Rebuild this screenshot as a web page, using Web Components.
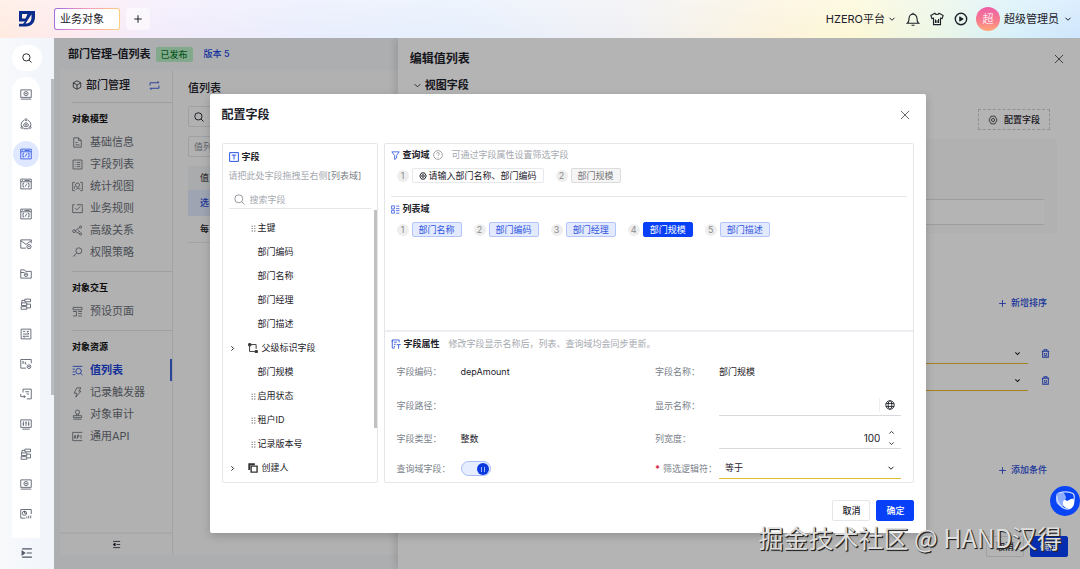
<!DOCTYPE html>
<html lang="zh-CN">
<head>
<meta charset="utf-8">
<title>业务对象</title>
<style>
  html, body { margin: 0; height: 100%; }
  body {
    font-family: Inter, "Noto Sans CJK SC", sans-serif;
    font-size: 9px; line-height: 16px; color: #1d2129; background: #f5f7fa; overflow: hidden;
    --blue: #0840f8; --line: #e4e6ea; --muted: #a6a9b0; --label: #7a7f8a;
  }
</style>
</head>
<body>
<app-shell>
  <app-header slot="header"></app-header>
  <icon-rail slot="rail"></icon-rail>
  <app-workspace slot="main"></app-workspace>
  <field-drawer slot="drawer"></field-drawer>
  <config-dialog slot="dialog"></config-dialog>
</app-shell>

<script>
const ICONS = {
  plus: '<path d="M8 2v12M2 8h12"/>',
  close: '<path d="M1.500 1.500l13 13M14.500 1.500l-13 13"/>',
  down: '<path d="M3 5.5l5 5 5-5"/>',
  up: '<path d="M3 10.5l5-5 5 5"/>',
  right: '<path d="M5.5 3l5 5-5 5"/>',
  search: '<circle cx="7" cy="7" r="5.8"/><path d="M11.300 11.300l4 4"/>',
  bell: '<path d="M8 .800v1.200M1.500 12.800h13c-1.500-1-2-2.500-2-5.600a4.500 4.800 0 0 0-9 0C3.500 10.300 3 11.800 1.500 12.800zM6.300 15.200h3.400"/>',
  shirt: '<path d="M5.500 1.500L1 4l1.200 3.500L4 7v7.500h8V7l1.800.5L15 4l-4.500-2.500C9.800 3.300 6.200 3.300 5.500 1.500zM6.200 8.500v4M8 9.500v3M9.800 8v4.500"/>',
  play: '<circle cx="8" cy="8" r="6.5"/><path d="M6.500 5.500v5L10.500 8z" fill="currentColor" stroke-width="1"/>',
  monitor: '<path d="M1 2.500h14v10H1zM1 14.800h14"/><path d="M8 4.500l2.600 1.500v3L8 10.500 5.400 9V6z"/><circle cx="8" cy="7.500" r=".7"/>',
  ring: '<path d="M5.500 3A6.600 6.600 0 0 0 2 11.500M10.500 3A6.600 6.600 0 0 1 14 11.500M4.500 14.300h7"/><circle cx="8" cy="2.300" r="1.400"/><circle cx="2.600" cy="12.600" r="1.300"/><circle cx="13.400" cy="12.600" r="1.300"/><path d="M5 10.500V8.300L8 6l3 2.300v2.200L8 11.800z"/><circle cx="8" cy="9" r=".8"/>',
  code: '<path d="M1 1.500h14v13H1zM1 5h14M3 3.300h1M6 3.300h7M5.500 7H4v5h1.500M10.500 7H12v5h-1.500M9 7.500l-2 4"/>',
  mail: '<path d="M15 7V2.500H1v11h7M1 3.500l7 5 7-5"/><circle cx="12" cy="11.500" r="2.800"/><circle cx="12" cy="11.500" r=".6"/>',
  folder: '<path d="M1 13.500v-11h5l1.500 2H15v9zM1 6h5"/><path d="M8 6.500l2.200 1.300v2.500L8 11.500l-2.200-1.200V7.800z"/><circle cx="8" cy="9" r=".5"/>',
  flow: '<path d="M6.500 1.500H14v3.500H6.500zM2 6.500h7V10H2zM1.500 11.500H9V15H1.500zM6.500 3.200H2.500v3.300M9 8.200h5v5H9"/>',
  swap: '<path d="M1.500 1.500h13v13h-13zM4 4.500h3M9 4.500h3M4 8h8l-2-2M12 11H4l2 2"/>',
  cardset: '<path d="M15 7V2H1v11.500h7M4 5v3M7 5v3h1.500M3 5h2"/><circle cx="12" cy="11.500" r="2.500"/><circle cx="12" cy="11.500" r=".6"/>',
  enter: '<path d="M4 6V1.500h11v13H9M7 5h5M9 8h3M1 8v3.500h6M5 9.500l2 2-2 2"/>',
  sliders: '<path d="M1 2.500h14v10H1zM3 14.800h10M4.500 4.500v6M8 4.500v6M11.500 4.500v6M3.500 8h2M7 6.500h2M10.500 8h2"/>',
  chart: '<path d="M15 8V2H1v11.500h6"/><circle cx="6" cy="7" r="2.800"/><path d="M6 4v3h3M9 13.800v-2.500M11.500 13.800v-3.500M14.300 13.800V10"/>',
  indent: '<path d="M1.500 2.500h13M7.500 8h7M1.500 13.500h13"/><path d="M1.500 5.500v5L5 8z" fill="currentColor"/>',
  outdent: '<path d="M2 2.500h12.500M8 8h6.500M2 13.500h12.500"/><path d="M5.500 5.500v5L2 8z" fill="currentColor"/>',
  cube: '<path d="M8 1.200l6 3.300v7L8 14.800l-6-3.300v-7zM2 4.500L8 8l6-3.500M8 8v6.800"/>',
  loop: '<path d="M1.500 8V4h13l-2-2.300M14.500 8v4h-13l2 2.300"/>',
  doc: '<path d="M2.500 1.200h7l4 4v9.600h-11zM9.500 1.200v4h4M5 8h3M5 11.500h6"/>',
  list: '<path d="M1.500 1.500h13v13h-13zM4 5h1M7 5h5M4 8h1M7 8h5M4 11h1M7 11h5"/>',
  stats: '<path d="M4 2H1v12h3M12 2h3v12h-3M3.500 11V8M5.500 13l3-3 2 2 2-2"/><circle cx="8" cy="6" r="3"/>',
  rule: '<path d="M15 6v8H1V2.500h3M7 2.500h8v3M4.500 7.500L7 10l5-5"/>',
  share: '<circle cx="3" cy="9" r="2"/><circle cx="12.500" cy="3" r="1.600"/><circle cx="12.500" cy="13" r="1.600"/><path d="M4.800 8L11 4M5 9.500l6 3M8.500 8l3.500 2"/>',
  key: '<circle cx="10" cy="5.500" r="4.300"/><path d="M7 8.500L1.500 14M3.500 12l1.500 1.500"/>',
  pages: '<path d="M1.500 2h13v3.500h-13zM1.500 8h5v6.500h-5M9 8h5.500M9 11h5.500M9 14.500h5.500"/>',
  lookup: '<path d="M1 2h14M1 6h3M1 10h3M1 14h4"/><circle cx="9.500" cy="9" r="4"/><path d="M12.300 12l3 3"/>',
  bolt: '<path d="M7 1.200h6L9.800 6H13L5.500 14.800 7 9H3z"/>',
  stamp: '<circle cx="8" cy="4.500" r="3"/><path d="M6.500 7.300v2.200M9.500 7.300v2.200M2 9.700h12v2.800H2zM2 14.800h12"/>',
  api: '<path d="M15 2H1v12h14M3 11l1.500-5L6 11M3.500 9.500h2M8 11V6h2v2.500H8M13 6v5"/>',
  gear: '<path d="M5 1.800h6l3.500 6.200-3.500 6.200H5L1.500 8z"/><circle cx="8" cy="8" r="2.500"/>',
  trash: '<path d="M1.500 4h13M5.500 4V1.500h5V4M3 4v10.500h10V4M5.500 12h5M6.500 7v3M9.500 7v3"/>',
  text: '<path d="M1 1h14v14H1zM4.500 5h7M8 5v7"/>',
  funnel: '<path d="M1.500 1.500h13L10 8v4.500L6.500 15V8z"/>',
  help: '<circle cx="8" cy="8" r="7"/><path d="M5.800 6.200c0-3 4.400-2.700 4.400-.2C10.200 7.700 8 7.700 8 9.500M8 11.300v1"/>',
  fields: '<path d="M1 1.500h5V7H1zM1 9.500h5v5H1zM9 2h6M9 6.500h6M9 10h6M9 14.500h6"/>',
  props: '<path d="M6 14.500H2v-13h11v4M2 1.500v3M4.500 5h5M4.500 8.500h3M9 9h6.500M12.200 9v6.500M4.500 12h2"/>',
  grip: '<g fill="currentColor" stroke="none"><circle cx="5" cy="2.500" r="1.400"/><circle cx="11" cy="2.500" r="1.400"/><circle cx="5" cy="8" r="1.400"/><circle cx="11" cy="8" r="1.400"/><circle cx="5" cy="13.500" r="1.400"/><circle cx="11" cy="13.500" r="1.400"/></g>',
  node: '<path d="M4.500 2.500H13v7M2.500 4.500v9H11"/><path d="M1 1h3.500v3.500H1zM11.500 12H15v3.500h-3.500z" fill="currentColor"/>',
  copy: '<path d="M5 5h9.500v9.500H5z" stroke-width="2.200"/><path d="M2 11V2h9" stroke-width="3"/>',
  globe: '<circle cx="8" cy="8" r="6.800"/><ellipse cx="8" cy="8" rx="3" ry="6.800"/><path d="M1.500 5.700h13M1.500 10.300h13"/>'
};

const define = (name, css, html) => {
  const template = document.createElement('template');
  template.innerHTML = `<style>*,:host{box-sizing:border-box}
    button,input,select{font:inherit;color:inherit;margin:0;padding:0;border:0;background:none;outline:0}
    button{display:flex;align-items:center;justify-content:center;white-space:nowrap}
    ul,ol{list-style:none;margin:0;padding:0} h1,h2,h3{margin:0;font:inherit}
    ${css}</style>${html}`;
  customElements.define(name, class extends HTMLElement {
    constructor() {
      super();
      this.attachShadow({ mode: 'open' }).append(template.content.cloneNode(true));
    }
  });
};

/* <ui-icon name size weight> : one line icon on a 16-unit grid */
customElements.define('ui-icon', class extends HTMLElement {
  connectedCallback() {
    if (this.shadowRoot) return;
    const size = this.getAttribute('size') || 10;
    this.attachShadow({ mode: 'open' }).innerHTML = `
      <style>:host{display:inline-flex;flex:none}svg{display:block}</style>
      <svg width="${size}" height="${size}" viewBox="0 0 16 16" fill="none" stroke="currentColor"
        stroke-width="${this.getAttribute('weight') || 1.3}" aria-hidden="true">${ICONS[this.getAttribute('name')]}</svg>`;
  }
});

define('app-shell', `
  :host{display:grid;grid-template:38px minmax(0,1fr) / 54px minmax(0,1fr);height:100vh;overflow:hidden;position:relative}
  .header{grid-column:1/-1}
  .stage{position:relative;display:grid;overflow:hidden}
  .drawer{position:absolute;top:0;right:0;bottom:0;width:66.5%}
  .scrim{position:absolute;inset:0;background:rgba(0,0,0,.29);display:flex;justify-content:center;align-items:flex-start;padding:56px 0 0 2px}
  .dialog{width:70%}
  .help{position:absolute;right:0;bottom:53px;width:30px;height:30px;border-radius:50%;background:#0a45f5}
  .mark{position:absolute;right:18px;bottom:14px;font-size:25px;line-height:36px;color:#dedede;
    font-family:"Noto Sans CJK SC",sans-serif;text-shadow:1px 1px 1px #222,1px 1px 0 #333;white-space:nowrap}
`, `
  <div class="header"><slot name="header"></slot></div>
  <slot name="rail"></slot>
  <div class="stage">
    <slot name="main"></slot>
    <div class="drawer"><slot name="drawer"></slot></div>
    <div class="scrim"><div class="dialog"><slot name="dialog"></slot></div></div>
  </div>
  <button class="help" aria-label="助手"><svg width="22" height="22" viewBox="0 0 22 22">
    <path d="M2 5c1-3 5-4 8-2l2 4-2 9c-4 1-7-1-8-5z" fill="#8faeff"/>
    <path d="M5 3c6-2 14-1 15 2 1 5-1 12-5 14C9 20 2 13 3 6" fill="none" stroke="#cfdcff" stroke-width="1.200"/>
    <path d="M9 12c1-3 3-2 4-1 2-1 6-4 7-1 1 4-1 8-4 9-4 0-8-3-7-7z" fill="#fff"/></svg></button>
  <div class="mark">掘金技术社区 @ HAND汉得</div>
`);

define('app-header', `
  :host{display:flex;align-items:center;height:38px;padding:0 8px 0 19px;font-size:11px;
    background:linear-gradient(180deg,rgba(255,255,255,.3),rgba(255,255,255,0)),
    linear-gradient(90deg,#ffeadf 0,#fdeaf0 7%,#f3ebfb 14%,#e9edfd 28%,#e6effd 42%,#f0f0f4 58%,#fcf3dc 72%,#fdf8d6 79%,#edf6e4 86%,#d6f0fa 94%,#cfe6fd 100%)}
  .logo{display:block;margin-right:19px}
  .tab{width:66px;height:22px;border:1px solid transparent;border-radius:3px;padding-right:10px;
    background:linear-gradient(#fff,#fff) padding-box,linear-gradient(100deg,#a06be0,#f09ac0 45%,#ffd27a) border-box}
  .add{width:24px;height:22px;margin-left:6px;border-radius:4px;background:rgba(255,255,255,.55)}
  .right{margin-left:auto;display:flex;align-items:center;gap:10px}
  .menu{gap:3px}
  .user{display:flex;align-items:center;gap:4px;margin-left:-2px}
  .avatar{width:24px;height:24px;border-radius:50%;display:flex;align-items:center;justify-content:center;color:#ffe3ec;
    background:linear-gradient(180deg,#ee5fa8,#f77d8c 60%,#ffa878)}
  .me{gap:5px}
`, `
  <svg class="logo" width="16" height="16" viewBox="0 0 16 16"><path d="M0 0h16v6c0 5.500-3.500 9.500-9 9.500H0V12.800h4L6 10.500H0zM3 3v4.500h3.500L8.500 3zM12.500 3.300L6.500 12.500c4.500 0 6-2.500 6-6.500z" fill="#0a2c8c" fill-rule="evenodd"/></svg>
  <button class="tab">业务对象</button>
  <button class="add" aria-label="新增"><ui-icon name="plus" size="10" weight="1.600"></ui-icon></button>
  <div class="right">
    <button class="menu">HZERO平台 <ui-icon name="down" size="8" weight="2"></ui-icon></button>
    <button aria-label="通知"><ui-icon name="bell" size="14"></ui-icon></button>
    <button aria-label="主题"><ui-icon name="shirt" size="14"></ui-icon></button>
    <button aria-label="播放"><ui-icon name="play" size="14" weight="1.600"></ui-icon></button>
    <div class="user"><span class="avatar">超</span>
    <button class="me">超级管理员 <ui-icon name="down" size="8" weight="2"></ui-icon></button></div>
  </div>
`);

define('icon-rail', `
  :host{display:flex;flex-direction:column;align-items:flex-start;padding:7px 0 1px 12px;background:linear-gradient(90deg,#f7f9fb,#f1f5fb);position:relative;color:#4e5563;overflow:hidden}
  .search{width:30px;height:26px;border-radius:13px;background:#fff;color:#222}
  .list{width:28px;flex:1;min-height:0;overflow:hidden;margin-top:6px;padding-top:4px;background:#fff;border-radius:14px 14px 0 0}
  .list button{width:26px;height:26px;margin:0 1px 4px;border-radius:13px}
  .list button.on{background:#e0e8ff;color:#2750e0}
  .fold{width:30px;height:30px}
  .bar{position:absolute;right:0;top:41px;width:3px;height:316px;background:#b9bcc0}
`, `
  <button class="search" aria-label="搜索"><ui-icon name="search" size="10" weight="1.500"></ui-icon></button>
  <nav class="list">${['monitor','ring','code','code','code','mail','folder','flow','swap','cardset','enter','sliders','flow','monitor','chart']
    .map((n, i) => `<button class="${i === 2 ? 'on' : ''}" aria-label="应用 ${i + 1}"><ui-icon name="${n}" size="12" weight="1.100"></ui-icon></button>`).join('')}</nav>
  <button class="fold" aria-label="展开"><ui-icon name="indent" size="12" weight="1.400"></ui-icon></button>
  <div class="bar"></div>
`);

const menu = (title, items) => `<section><h3>${title}</h3><ul>${items.map(([icon, text, on]) =>
  `<li><a href="#" class="${on ? 'on' : ''}"><ui-icon name="${icon}" size="11" weight="1.200"></ui-icon>${text}</a></li>`).join('')}</ul></section>`;

define('side-menu', `
  :host{display:flex;flex-direction:column;width:113px;border-right:1px solid #e4e6ea;background:#f9f9fa}
  .object{display:flex;align-items:center;height:32px;padding:0 12px;gap:4px;font-size:11px;line-height:14px;padding-bottom:2px;font-weight:500}
  .object ui-icon:last-child{margin-left:auto;color:#2c4fd6}
  section{margin-left:12px;border-top:1px solid #dfe1e5;padding-bottom:8px}
  h3{font-size:9px;font-weight:700;line-height:15px;padding:8px 0 5px;color:#111}
  a{display:flex;align-items:center;gap:7px;height:22px;font-size:11px;line-height:20px;color:#6a6e76;text-decoration:none}
  a.on{color:#1e46d8;font-weight:700;box-shadow:inset -2px 0 #3b62d9}
  footer{margin-top:auto;display:flex;justify-content:center;align-items:center;height:23px;border-top:2px solid #eeeff1}
`, `
  <div class="object"><ui-icon name="cube" size="10" weight="1.200"></ui-icon>部门管理<ui-icon name="loop" size="11"></ui-icon></div>
  ${menu('对象模型', [['doc','基础信息'],['list','字段列表'],['stats','统计视图'],['rule','业务规则'],['share','高级关系'],['key','权限策略']])}
  ${menu('对象交互', [['pages','预设页面']])}
  ${menu('对象资源', [['lookup','值列表',1],['bolt','记录触发器'],['stamp','对象审计'],['api','通用API']])}
  <footer><button aria-label="收起"><ui-icon name="outdent" size="9" weight="1.400"></ui-icon></button></footer>
`);

define('app-workspace', `
  :host{display:flex;flex-direction:column;background:#f4f6f8;padding:0 0 14px 6px;min-height:0}
  .top{display:flex;align-items:center;gap:5px;height:32px;padding-left:8px}
  h1{font-size:11px;font-weight:600}
  .tag{font-size:9px;font-weight:500;line-height:15px;padding:0 5px;border-radius:2px;background:#b9efc5;color:#0b7a2e}
  .ver{color:#1b46e0;font-weight:500;padding:0 6px}
  .main{display:flex;flex:1;min-height:0}
  .content{flex:1;background:#fafafa;padding:9px 0 0 15px}
  h2{font-size:11px;font-weight:500;line-height:18px}
  .box{display:flex;align-items:center;height:21px;width:140px;border:1px solid #e0e2e6;border-radius:2px;padding-left:5px;margin-top:9px}
  .cols{color:#888d96;padding-left:5px}
  table{width:180px;border-collapse:collapse;margin-top:9px}
  th,td{text-align:left;padding:0 0 0 12px;height:26px;font-weight:500}
  th{background:#eff1f4;height:24px;color:#555}
  .on td{background:#dfe7fb;color:#1e46d8}
  tr:last-child td{border-bottom:1px solid #e6e6e6}
`, `
  <div class="top"><h1>部门管理–值列表</h1><span class="tag">已发布</span><span class="ver">版本 5</span></div>
  <div class="main">
    <side-menu></side-menu>
    <div class="content">
      <h2>值列表</h2>
      <div class="box"><ui-icon name="search" size="10" weight="1.500"></ui-icon></div>
      <div class="box cols">值列</div>
      <table><thead><tr><th>值</th></tr></thead><tbody><tr class="on"><td>选</td></tr><tr><td>每</td></tr></tbody></table>
    </div>
  </div>
`);

const sortRow = n => `<div class="row"><select aria-label="排序字段 ${n}"><option></option></select><ui-icon name="down" size="7" weight="2.400"></ui-icon><button aria-label="删除"><ui-icon name="trash" size="9" weight="1.800"></ui-icon></button></div>`;

define('field-drawer', `
  :host{display:flex;flex-direction:column;height:100%;background:#fefefe;box-shadow:-3px 0 8px rgba(0,0,0,.12);padding:0 12px 12px}
  header{display:flex;align-items:center;justify-content:space-between;height:40px;padding:1px 4px 0 0;font-size:12px;font-weight:600}
  header button{color:#333}
  h3{display:flex;align-items:center;gap:3px;font-size:11px;line-height:14px;font-weight:600;padding-left:3px}
  .config{align-self:flex-end;flex:none;margin:17px 18px 9px 0;width:72px;height:21px;border:1px dashed #c9ccd2;gap:6px;font-weight:500}
  .panel{margin-right:11px;height:94px;padding:60px 13px 0;background:#f9f9fa;border-radius:2px}
  .panel div{height:26px;border:solid #dcdee2;border-width:1px 0;background:#fefefe}
  .link{align-self:flex-end;margin-right:21px;height:16px;gap:4px;color:#2b4cd8;font-weight:500}
  .a{margin-top:62px}
  .rows{margin-top:32px}
  .row{display:flex;align-items:center;height:21px;margin-bottom:6px;padding-right:17px}
  .row select{appearance:none;flex:1;height:21px;border-bottom:1px solid #e8b830}
  .row>ui-icon{margin:0 7px 0 -14px}
  .row button{width:9px;height:20px;margin:0 1px 0 13px;color:#2b4cd8}
  .b{margin-top:65px}
  footer{display:flex;justify-content:flex-end;gap:6px;margin-top:auto}
  footer button{width:38px;height:21px;border-radius:2px;border:1px solid #e0e2e6;font-weight:500}
  footer .ok{background:var(--blue);border-color:var(--blue);color:#fff}
`, `
  <header>编辑值列表<button aria-label="关闭"><ui-icon name="close" size="10"></ui-icon></button></header>
  <h3><ui-icon name="down" size="9" weight="1.500"></ui-icon>视图字段</h3>
  <button class="config"><ui-icon name="gear" size="10" weight="1.200"></ui-icon>配置字段</button>
  <div class="panel"><div></div></div>
  <button class="link a"><ui-icon name="plus" size="9" weight="1.600"></ui-icon>新增排序</button>
  <div class="rows">${sortRow(1)}${sortRow(2)}</div>
  <button class="link b"><ui-icon name="plus" size="9" weight="1.600"></ui-icon>添加条件</button>
  <footer><button>取消</button><button class="ok">确定</button></footer>
`);

const tree = [['grip','主键'],['','部门编码'],['','部门名称'],['','部门经理'],['','部门描述'],['node','父级标识字段',1],['','部门规模'],['grip','启用状态'],['grip','租户ID'],['grip','记录版本号'],['copy','创建人',1]];

define('field-tree', `
  :host{display:flex;flex-direction:column;position:relative;border:1px solid var(--line);border-radius:2px;padding:5px 6px 0}
  h3{display:flex;align-items:center;gap:3px;line-height:16px;font-weight:600}
  h3 ui-icon{color:#2b55e8}
  p{margin:3px 0 7px;color:var(--muted);white-space:nowrap} b{font-weight:400;color:#7b7f87}
  label{display:flex;align-items:center;gap:5px;height:18px;padding-left:5px;border-bottom:1px solid var(--line);color:#8a8e96}
  input{min-width:0;flex:1;height:16px} input::placeholder{color:var(--muted);opacity:1}
  ul{padding-top:7px;margin-bottom:-2px}
  li{display:flex;align-items:center;height:24px;padding-left:20px;white-space:nowrap}
  .mark{width:9px;display:flex;justify-content:flex-end;padding-right:1px;color:#555}
  .branch{padding-left:0}
  .branch .mark{width:19px;margin-right:4px;padding:0;color:#333}
  .branch button{width:8px;height:16px;margin-right:2px}
  .bar{position:absolute;right:0;top:66px;width:3px;height:218px;background:#c1c1c1}
`, `
  <h3><ui-icon name="text" size="10" weight="1.600"></ui-icon>字段</h3>
  <p>请把此处字段拖拽至右侧<b>[列表域]</b></p>
  <label><ui-icon name="search" size="11"></ui-icon><input type="text" placeholder="搜索字段" aria-label="搜索字段"></label>
  <ul>${tree.map(([icon, text, branch]) => `<li class="${branch ? 'branch' : ''}">${branch ? '<button aria-label="展开"><ui-icon name="right" size="7" weight="2.200"></ui-icon></button>' : ''}<span class="mark">${icon ? `<ui-icon name="${icon}" size="${branch ? 10 : 7}" weight="1.500"></ui-icon>` : ''}</span>${text}</li>`).join('')}</ul>
  <div class="bar"></div>
`);

/* A numbered field chip; kind is plain, off, soft or solid */
define('field-chip', `
  :host{display:flex;align-items:center;gap:3px}
  i{width:12px;height:12px;border-radius:50%;background:#eee;color:#8a8a8a;font-style:normal;line-height:12px;text-align:center}
  span{display:flex;align-items:center;gap:2px;height:15px;padding:0 6px;border:1px solid #e6e8ec;border-radius:2px;line-height:13px;white-space:nowrap}
  :host([kind=off]) span{background:#f5f5f5;border-color:#dcdcdc;color:#777}
  :host([kind=soft]) span{background:#e3eafe;border-color:#b3c4fa;color:#2f56e0}
  :host([kind=solid]) span{background:var(--blue);border-color:var(--blue);color:#fff}
`, `<i><slot name="no"></slot></i><span><slot></slot></span>`);

const chip = (no, text, kind = 'soft', icon = '') => `<field-chip kind="${kind}"><b slot="no" style="font-weight:400">${no}</b>${icon}${text}</field-chip>`;

define('field-domains', `
  :host{display:block;padding:0 6px}
  h3{display:flex;align-items:center;gap:3px;line-height:16px;font-weight:600}
  h3>ui-icon:first-child{color:#3355dd}
  h3 small{font-size:9px;font-weight:400;color:var(--muted);margin-left:6px}
  h3 .q{color:#888}
  .chips{display:flex;gap:12px;padding:5px 0 0 6px}
  .query{height:53px;padding-top:3px;border-bottom:1px solid var(--line)}
  .list{height:133px;padding-top:4px}
`, `
  <section class="query">
    <h3><ui-icon name="funnel" size="9" weight="1.500"></ui-icon>查询域<ui-icon class="q" name="help" size="10" weight="1.200"></ui-icon><small>可通过字段属性设置筛选字段</small></h3>
    <div class="chips">${chip(1, '请输入部门名称、部门编码', 'plain', '<ui-icon name="gear" size="8" weight="2"></ui-icon>')}${chip(2, '部门规模', 'off')}</div>
  </section>
  <section class="list">
    <h3><ui-icon name="fields" size="9" weight="1.400"></ui-icon>列表域</h3>
    <div class="chips">${chip(1, '部门名称')}${chip(2, '部门编码')}${chip(3, '部门经理')}${chip(4, '部门规模', 'solid')}${chip(5, '部门描述')}</div>
  </section>
`);

define('field-properties', `
  :host{display:block;border-top:2px solid #eceef1;padding:4px 12px 0}
  h3{display:flex;align-items:center;gap:3px;line-height:16px;font-weight:600;margin-left:-6px}
  h3 ui-icon{color:#3355dd} h3 small{font-size:9px;font-weight:400;color:var(--muted);margin-left:6px}
  form{display:grid;grid-template-columns:1fr 1fr;grid-template-rows:34px 33px 33px 27px;column-gap:12px;align-items:center;margin-top:3px}
  .f{display:grid;grid-template-columns:64px minmax(0,1fr);align-items:center}
  label,.l{color:var(--label);white-space:nowrap} em{color:#d8223c;font-style:normal;margin-right:3px;font-weight:700}
  .c{display:flex;align-items:center;height:21px;border-bottom:1px solid #d8dade;padding-right:6px}
  .c input,.c select{flex:1;min-width:0;height:20px;appearance:none}
  .c input[type=number]{text-align:right;appearance:textfield;font-size:10px;padding-right:8px}
  input::-webkit-inner-spin-button{display:none}
  .globe{border-left:1px solid #eee;padding-left:5px;height:14px}
  .spin{display:flex;flex-direction:column;gap:4px}
  .c.req{border-color:#e0bf2c} .req select{padding-left:6px}
  .sw{appearance:none;width:30px;height:15px;border:1px solid #a9bcf8;border-radius:8px;background:#e6edff;display:flex;justify-content:flex-end;align-items:center;padding-right:1px}
  .sw::before{content:"";width:12px;height:12px;border-radius:50%;background:linear-gradient(90deg,transparent 4px,#9db6ff 4px 5px,transparent 5px 7px,#9db6ff 7px 8px,transparent 8px) 0 4px/12px 5px no-repeat,#0a3ae0}
`, `
  <h3><ui-icon name="props" size="10" weight="1.400"></ui-icon>字段属性<small>修改字段显示名称后，列表、查询域均会同步更新。</small></h3>
  <form>
    <div class="f"><span class="l">字段编码：</span><span>depAmount</span></div>
    <div class="f"><span class="l">字段名称：</span><span>部门规模</span></div>
    <div class="f"><span class="l">字段路径：</span><span></span></div>
    <div class="f"><label for="show">显示名称：</label><div class="c"><input id="show" type="text"><button type="button" class="globe" aria-label="多语言"><ui-icon name="globe" size="10" weight="1.400"></ui-icon></button></div></div>
    <div class="f"><span class="l">字段类型：</span><span>整数</span></div>
    <div class="f"><label for="width">列宽度：</label><div class="c"><input id="width" type="number" value="100"><div class="spin"><button type="button" aria-label="增加"><ui-icon name="up" size="7" weight="2"></ui-icon></button><button type="button" aria-label="减少"><ui-icon name="down" size="7" weight="2"></ui-icon></button></div></div></div>
    <div class="f"><label for="query">查询域字段：</label><input id="query" class="sw" type="checkbox" role="switch" checked></div>
    <div class="f"><label for="op"><em>*</em>筛选逻辑符：</label><div class="c req"><select id="op"><option>等于</option></select><ui-icon name="down" size="8" weight="2"></ui-icon></div></div>
  </form>
`);

define('config-dialog', `
  :host{display:flex;flex-direction:column;background:#fff;border-radius:2px;padding:0 12px 12px;box-shadow:0 3px 10px rgba(0,0,0,.18)}
  header{display:flex;align-items:center;justify-content:space-between;height:42px;padding-right:4px;font-size:12px;font-weight:600}
  header button{color:#444}
  .body{display:grid;grid-template-columns:156px minmax(0,1fr);gap:6px;margin-top:7px}
  .right{border:1px solid var(--line);border-radius:2px}
  footer{display:flex;justify-content:flex-end;gap:6px;margin-top:17px}
  footer button{width:38px;height:21px;border:1px solid #e4e6ea;border-radius:2px;font-weight:500}
  footer .ok{background:var(--blue);border-color:var(--blue);color:#fff}
`, `
  <header>配置字段<button aria-label="关闭"><ui-icon name="close" size="10"></ui-icon></button></header>
  <div class="body"><field-tree></field-tree><div class="right"><field-domains></field-domains><field-properties></field-properties></div></div>
  <footer><button>取消</button><button class="ok">确定</button></footer>
`);
</script>
</body>
</html>
